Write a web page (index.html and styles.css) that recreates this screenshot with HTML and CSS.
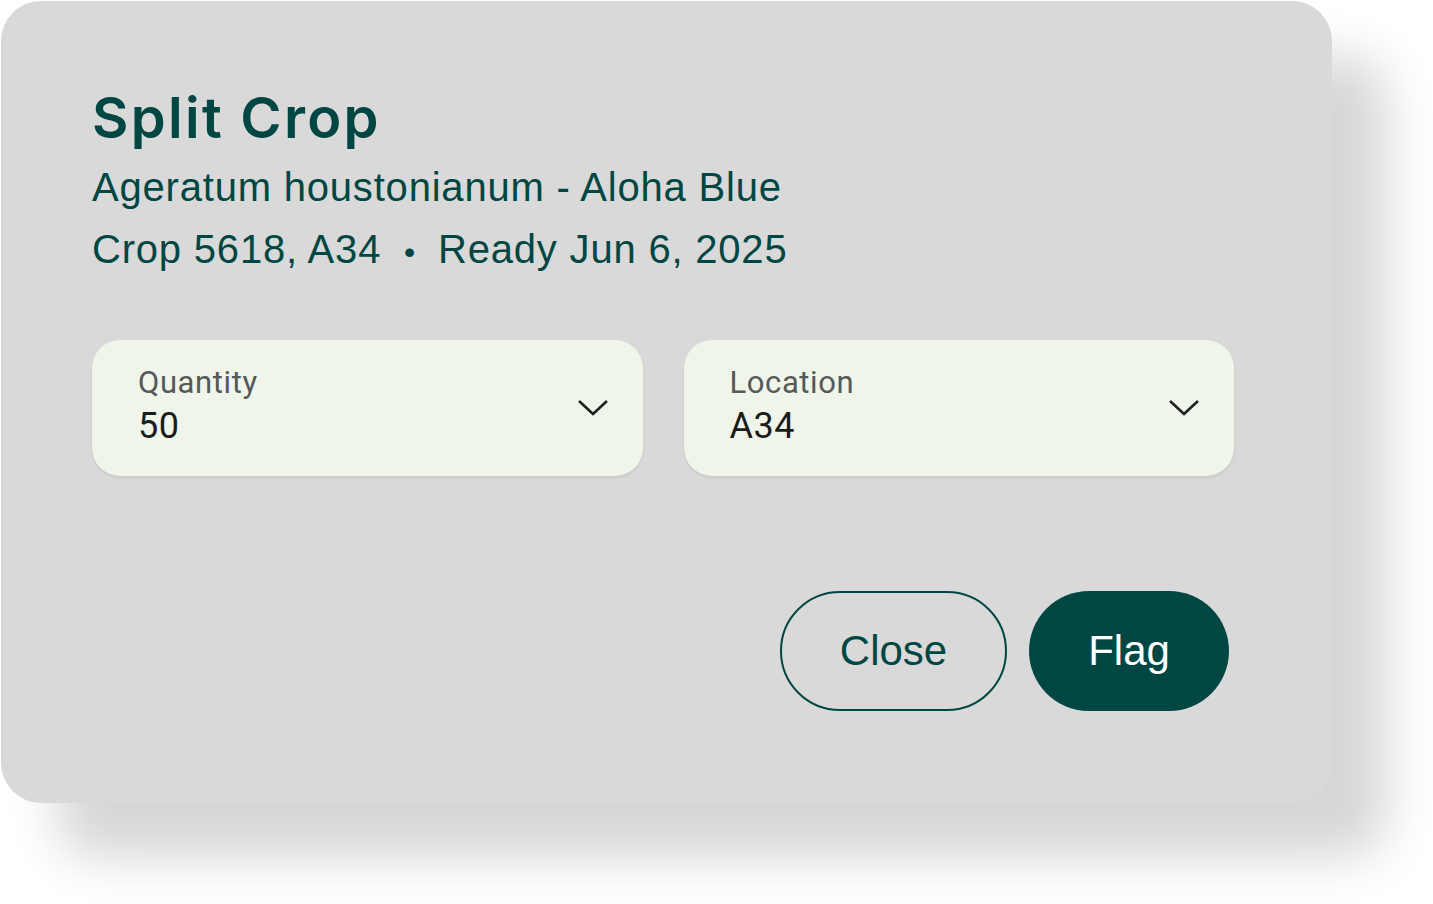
FILE: index.html
```html
<!DOCTYPE html>
<html lang="en">

<head>
    <meta charset="UTF-8">
    <meta name="viewport" content="width=device-width, initial-scale=1.0">
    <title>Split Crop</title>
    <link rel="stylesheet" href="styles.css">
</head>

<body>
    <div class="dialog">
        <h1 class="dialog-title">Split Crop</h1>
        <p class="dialog-sub">Ageratum houstonianum - Aloha Blue</p>
        <p class="dialog-sub">Crop 5618, A34 <span class="dot">•</span> Ready Jun 6, 2025</p>

        <div class="fields">
            <div class="field">
                <div class="field-text">
                    <span class="field-label">Quantity</span>
                    <span class="field-value">50</span>
                </div>
                <svg class="chevron" width="32" height="20" viewBox="0 0 32 20">
                    <path d="M2 3 L16 16 L30 3" fill="none" stroke="#1d1f1f" stroke-width="2.6" />
                </svg>
            </div>
            <div class="field">
                <div class="field-text">
                    <span class="field-label">Location</span>
                    <span class="field-value">A34</span>
                </div>
                <svg class="chevron" width="32" height="20" viewBox="0 0 32 20">
                    <path d="M2 3 L16 16 L30 3" fill="none" stroke="#1d1f1f" stroke-width="2.6" />
                </svg>
            </div>
        </div>

        <div class="actions">
            <button class="btn btn-outline">Close</button>
            <button class="btn btn-filled">Flag</button>
        </div>
    </div>
</body>

</html>
```

FILE: styles.css
```css
html,
body {
    margin: 0;
    padding: 0;
}

body {
    min-height: 904px;
    background: #fff;
    font-family: "Liberation Sans", Arial, sans-serif;
    color: #004744;
    overflow: hidden;
}

.dialog {
    width: 1331px;
    height: 802px;
    box-sizing: border-box;
    margin: 1px 0 0 1px;
    padding: 85px 98px 0 91px;
    background: #d9d9d9;
    border-radius: 40px;
    box-shadow: 55px 55px 50px rgba(0, 0, 0, 0.16);
}

.dialog-title {
    margin: 0 0 8px;
    font-family: Inter, sans-serif;
    font-weight: 600;
    font-size: 56px;
    line-height: 64px;
    letter-spacing: 2.3px;
    color: #004744;
}

.dialog-sub {
    margin: 0;
    font-size: 40px;
    line-height: 62px;
    letter-spacing: 0.8px;
}

.dialog-sub:first-of-type {
    margin-top: -2px;
}

.dot {
    margin: 0 10px 0 11px;
    font-size: 32px;
}

.fields {
    display: flex;
    gap: 41px;
    margin-top: 57px;
}

.field {
    flex: 1;
    height: 136px;
    box-sizing: border-box;
    display: flex;
    align-items: center;
    justify-content: space-between;
    padding: 0 34px 0 46px;
    background: #eff5e8;
    border-radius: 28px;
    box-shadow: 0 2px 3px rgba(0, 0, 0, 0.08);
}

.field-text {
    display: flex;
    flex-direction: column;
    gap: 3px;
    font-family: Roboto, sans-serif;
    padding-bottom: 4px;
}

.field-label {
    font-size: 31px;
    line-height: 36px;
    letter-spacing: 0.6px;
    color: #55595a;
}

.field-value {
    font-size: 36px;
    line-height: 44px;
    letter-spacing: 0.5px;
    color: #1a1c1c;
}

.actions {
    display: flex;
    justify-content: flex-end;
    gap: 22px;
    margin-top: 115px;
    padding-right: 5px;
}

.btn {
    height: 120px;
    border-radius: 60px;
    font-family: "Liberation Sans", Arial, sans-serif;
    font-size: 42px;
    cursor: pointer;
    box-sizing: border-box;
}

.btn-outline {
    width: 227px;
    background: transparent;
    border: 2px solid #004744;
    color: #004744;
}

.btn-filled {
    width: 200px;
    background: #004744;
    border: none;
    color: #fff;
}
```
